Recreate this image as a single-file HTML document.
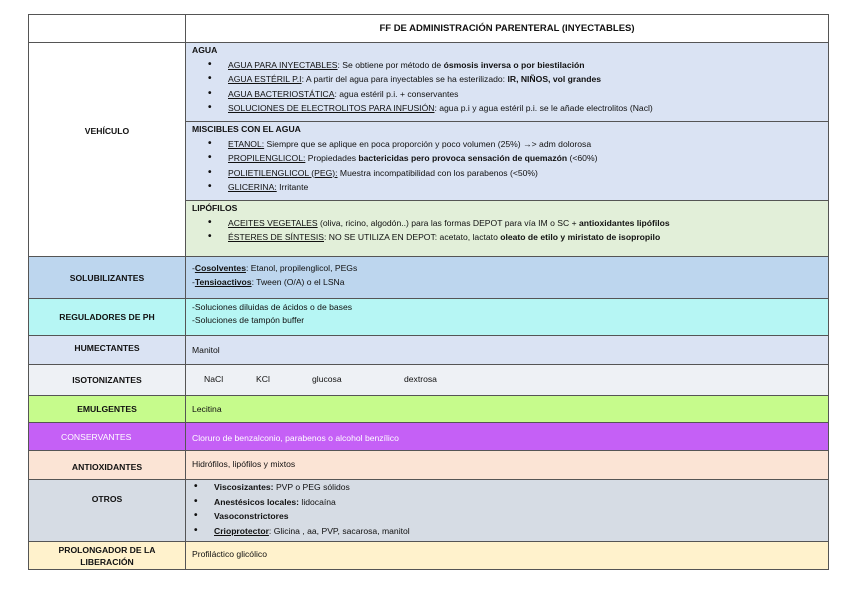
<!DOCTYPE html>
<html><head><meta charset="utf-8"><style>
body{margin:0;width:848px;height:599px;background:#fff;font-family:"Liberation Sans",sans-serif;font-size:8.6px;color:#111;position:relative;overflow:hidden}
.c{position:absolute;box-sizing:border-box;border:1px solid #555}
.l{left:28px;width:158px;display:flex;align-items:center;justify-content:center;text-align:center;font-weight:bold;font-size:8.6px}
.r{left:185px;width:644px;padding:2px 6px;line-height:14.5px}
u{text-decoration:underline}
ul{margin:0;padding-left:36px;list-style:none}
li{position:relative}
li:before{content:"•";position:absolute;left:-20px;font-weight:bold;font-size:10px}
b{font-weight:bold}
</style></head><body>
<div class="c" style="left:28px;top:14px;width:158px;height:29px"></div>
<div class="c" style="left:185px;top:14px;width:644px;height:29px;text-align:center;font-weight:bold;font-size:9.5px;line-height:27px">FF DE ADMINISTRACIÓN PARENTERAL (INYECTABLES)</div>
<div class="c l" style="top:42px;height:215px;align-items:flex-start;padding-top:83px">VEHÍCULO</div>
<div class="c r" style="top:42px;height:80px;background:#dae3f3;padding-top:0"><b>AGUA</b><ul>
<li><u>AGUA PARA INYECTABLES</u>: Se obtiene por método de <b>ósmosis inversa o por biestilación</b></li>
<li><u>AGUA ESTÉRIL P.I</u>: A partir del agua para inyectables se ha esterilizado: <b>IR, NIÑOS, vol grandes</b></li>
<li><u>AGUA BACTERIOSTÁTICA</u>: agua estéril p.i. + conservantes</li>
<li><u>SOLUCIONES DE ELECTROLITOS PARA INFUSIÓN</u>: agua p.i y agua estéril p.i. se le añade electrolitos (Nacl)</li></ul></div>
<div class="c r" style="top:121px;height:80px;background:#dae3f3;padding-top:0"><b>MISCIBLES CON EL AGUA</b><ul>
<li><u>ETANOL:</u> Siempre que se aplique en poca proporción y poco volumen (25%) →&gt; adm dolorosa</li>
<li><u>PROPILENGLICOL:</u> Propiedades <b>bactericidas pero provoca sensación de quemazón</b> (&lt;60%)</li>
<li><u>POLIETILENGLICOL (PEG):</u> Muestra incompatibilidad con los parabenos (&lt;50%)</li>
<li><u>GLICERINA:</u> Irritante</li></ul></div>
<div class="c r" style="top:200px;height:57px;background:#e2efd9;padding-top:0"><b>LIPÓFILOS</b><ul>
<li><u>ACEITES VEGETALES</u> (oliva, ricino, algodón..) para las formas DEPOT para vía IM o SC + <b>antioxidantes lipófilos</b></li>
<li><u>ÉSTERES DE SÍNTESIS</u>: NO SE UTILIZA EN DEPOT: acetato, lactato <b>oleato de etilo y miristato de isopropilo</b></li></ul></div>
<div class="c l" style="top:256px;height:43px;background:#bdd6ee">SOLUBILIZANTES</div>
<div class="c r" style="top:256px;height:43px;background:#bdd6ee;padding-top:5px;line-height:13.5px">-<b><u>Cosolventes</u></b>: Etanol, propilenglicol, PEGs<br>-<b><u>Tensioactivos</u></b>: Tween (O/A) o el LSNa</div>
<div class="c l" style="top:298px;height:38px;background:#b6f6f4">REGULADORES DE PH</div>
<div class="c r" style="top:298px;height:38px;background:#b6f6f4;padding-top:2px;line-height:13px">-Soluciones diluidas de ácidos o de bases<br>-Soluciones de tampón buffer</div>
<div class="c l" style="top:335px;height:30px;background:#dae3f3;align-items:flex-start;padding-top:7px">HUMECTANTES</div>
<div class="c r" style="top:335px;height:30px;background:#dae3f3;padding-top:7px">Manitol</div>
<div class="c l" style="top:364px;height:32px;background:#eef1f5">ISOTONIZANTES</div>
<div class="c r" style="top:364px;height:32px;background:#eef1f5;padding-top:7px"><span style="position:absolute;left:18px">NaCl</span><span style="position:absolute;left:70px">KCl</span><span style="position:absolute;left:126px">glucosa</span><span style="position:absolute;left:218px">dextrosa</span></div>
<div class="c l" style="top:395px;height:28px;background:#c6fb8c">EMULGENTES</div>
<div class="c r" style="top:395px;height:28px;background:#c6fb8c;padding-top:6px">Lecitina</div>
<div class="c l" style="top:422px;height:29px;background:#c560f6;color:#fff;font-weight:normal;justify-content:flex-start;padding-left:32px">CONSERVANTES</div>
<div class="c r" style="top:422px;height:29px;background:#c560f6;color:#fff;padding-top:8px">Cloruro de benzalconio, parabenos o alcohol benzílico</div>
<div class="c l" style="top:450px;height:30px;background:#fbe4d5;padding-top:3px">ANTIOXIDANTES</div>
<div class="c r" style="top:450px;height:30px;background:#fbe4d5;padding-top:6px">Hidrófilos, lipófilos y mixtos</div>
<div class="c l" style="top:479px;height:63px;background:#d6dce4;align-items:flex-start;padding-top:14px">OTROS</div>
<div class="c r" style="top:479px;height:63px;background:#d6dce4;padding-top:0"><ul style="padding-left:22px">
<li><b>Viscosizantes:</b> PVP o PEG sólidos</li>
<li><b>Anestésicos locales:</b> lidocaína</li>
<li><b>Vasoconstrictores</b></li>
<li><b><u>Crioprotector</u></b>: Glicina , aa, PVP, sacarosa, manitol</li></ul></div>
<div class="c l" style="top:541px;height:29px;background:#fff2cc;line-height:12px">PROLONGADOR DE LA<br>LIBERACIÓN</div>
<div class="c r" style="top:541px;height:29px;background:#fff2cc;padding-top:5px">Profiláctico glicólico</div>
</body></html>
